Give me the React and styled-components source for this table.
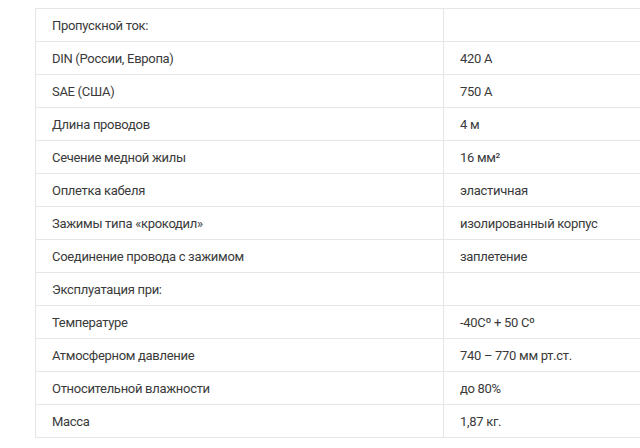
import React from "react";
import styled, { createGlobalStyle } from "styled-components";

const GlobalStyle = createGlobalStyle`
  html, body {
    margin: 0;
    padding: 0;
    background: #ffffff;
    overflow: hidden;
  }
  body {
    font-family: "Roboto", "Open Sans", sans-serif;
  }
`;

const Page = styled.div`
  padding: 8px 0 0 35px;
  width: 640px;
  box-sizing: border-box;
`;

const Table = styled.div`
  width: 625px;
  border: 1px solid #e6e6e6;
  border-bottom: none;
  display: grid;
  grid-template-columns: 407px 1fr;
`;

const Cell = styled.div`
  height: 32px;
  display: flex;
  align-items: center;
  padding-left: 16px;
  border-bottom: 1px solid #e6e6e6;
  border-left: ${(p) => (p.$value ? "1px solid #e6e6e6" : "none")};
  font-size: 13px;
  letter-spacing: -0.3px;
  color: #3a3a3a;
  white-space: nowrap;
`;

const rows = [
  ["Пропускной ток:", ""],
  ["DIN (России, Европа)", "420 А"],
  ["SAE (США)", "750 А"],
  ["Длина проводов", "4 м"],
  ["Сечение медной жилы", "16 мм²"],
  ["Оплетка кабеля", "эластичная"],
  ["Зажимы типа «крокодил»", "изолированный корпус"],
  ["Соединение провода с зажимом", "заплетение"],
  ["Эксплуатация при:", ""],
  ["Температуре", "-40Cº + 50 Cº"],
  ["Атмосферном давление", "740 – 770 мм рт.ст."],
  ["Относительной влажности", "до 80%"],
  ["Масса", "1,87 кг."],
];

export default function App() {
  return (
    <>
      <GlobalStyle />
      <Page>
        <Table>
          {rows.map(([name, value], i) => (
            <React.Fragment key={i}>
              <Cell>{name}</Cell>
              <Cell $value>{value}</Cell>
            </React.Fragment>
          ))}
        </Table>
      </Page>
    </>
  );
}
